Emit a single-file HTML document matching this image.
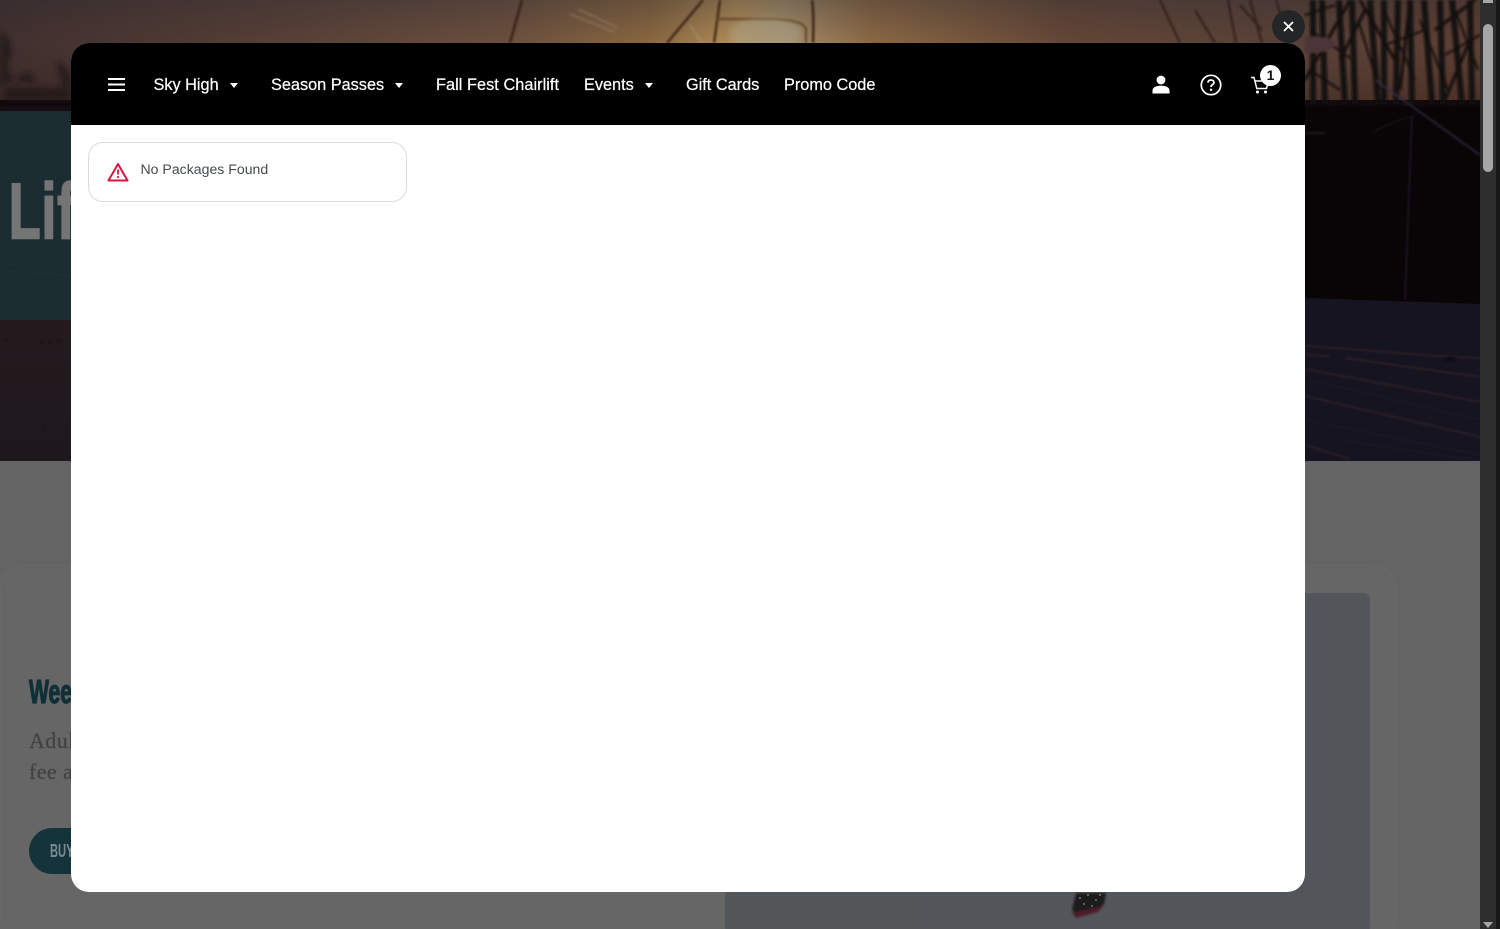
<!DOCTYPE html>
<html lang="en">
<head>
<meta charset="utf-8">
<title>No Packages Found</title>
<style>
html,body{margin:0;padding:0;width:1500px;height:929px;overflow:hidden;background:#646464;font-family:"Liberation Sans",Arial,sans-serif}
.abs{position:absolute}
#bg{position:absolute;left:0;top:0}
.h1{position:absolute;left:9px;top:168px;font:bold 78px/86px "Liberation Sans",sans-serif;color:#757575;-webkit-text-stroke:2.5px #757575;transform-origin:0 0;transform:scaleX(.66);letter-spacing:2px}
.h2{position:absolute;left:29px;top:671px;font:bold 33px/42px "Liberation Sans",sans-serif;color:#112f37;-webkit-text-stroke:1.2px #112f37;transform-origin:0 0;transform:scaleX(.64)}
.p{position:absolute;left:29px;font:22px/31px "Liberation Serif",serif;color:#434343;letter-spacing:.4px;-webkit-text-stroke:.3px #434343}
.btn{position:absolute;left:29px;top:828px;width:120px;height:46px;border-radius:23px;background:#15333a}
.btxt{position:absolute;left:50px;top:840px;font:bold 18px/22px "Liberation Sans",sans-serif;color:#7a8c90;transform-origin:0 0;transform:scaleX(.62)}
#modal{position:absolute;left:71px;top:43px;width:1234px;height:849px;background:#fff;border-radius:18px;overflow:hidden}
#nav{position:absolute;left:0;top:0;width:1234px;height:82px;background:#000}
.n{position:absolute;top:32px;color:#fff;font-size:16.3px;line-height:20px;white-space:nowrap;-webkit-text-stroke:.2px #fff}
.car{position:absolute;top:40px;width:0;height:0;border-left:4.5px solid transparent;border-right:4.5px solid transparent;border-top:5px solid #fff}
#alert{position:absolute;left:17px;top:99px;width:317px;height:58px;border:1px solid #dcdcdc;border-radius:15px;background:#fff}
#alert span{position:absolute;left:51.5px;top:17px;font-size:14.1px;line-height:18px;color:#454a50;white-space:nowrap}
#close{position:absolute;left:1272px;top:10px;width:33px;height:33px;border-radius:50%;background:#232526}
#sb{position:absolute;left:1480px;top:0;width:20px;height:929px;background:#2e2e2e}
#sb i{position:absolute;left:16px;top:0;width:4px;height:929px;background:#171717}
#sb b{position:absolute;left:3px;top:24px;width:10px;height:148px;border-radius:5px;background:#a6a6a6}
#badge{position:absolute;left:1189px;top:22px;width:21px;height:21px;border-radius:50%;background:#fff;color:#111;font:bold 14px/21px "Liberation Sans",sans-serif;text-align:center}
</style>
</head>
<body>
<svg id="bg" width="1500" height="929" viewBox="0 0 1500 929" xmlns="http://www.w3.org/2000/svg">
<defs>
<linearGradient id="sky" x1="0" x2="1" y1="0" y2="0">
<stop offset="0" stop-color="#40302f"/><stop offset=".2" stop-color="#5a4238"/><stop offset=".34" stop-color="#6e5240"/><stop offset=".44" stop-color="#8f6c42"/><stop offset=".5" stop-color="#bd985e"/><stop offset=".53" stop-color="#ad9670"/><stop offset=".59" stop-color="#8f6c46"/><stop offset=".72" stop-color="#664838"/><stop offset=".86" stop-color="#5a4338"/><stop offset="1" stop-color="#5f3f32"/>
</linearGradient>
<linearGradient id="skyV" x1="0" x2="0" y1="0" y2="1">
<stop offset="0" stop-color="#2c2a30" stop-opacity=".4"/><stop offset=".45" stop-color="#3b2a28" stop-opacity=".05"/><stop offset="1" stop-color="#2a1510" stop-opacity=".35"/>
</linearGradient>
<linearGradient id="img" x1="0" x2="1" y1="0" y2="0"><stop offset="0" stop-color="#54575a"/><stop offset="1" stop-color="#52565b"/></linearGradient>
<filter id="b1" x="-5%" y="-5%" width="110%" height="110%"><feGaussianBlur stdDeviation="1.1"/></filter>
<filter id="b2" x="-20%" y="-20%" width="140%" height="140%"><feGaussianBlur stdDeviation="3"/></filter>
<linearGradient id="bandL" x1="0" x2="0" y1="0" y2="1"><stop offset="0" stop-color="#241a1e"/><stop offset="1" stop-color="#1e181c"/></linearGradient>
<clipPath id="hero"><rect x="0" y="0" width="1480" height="461"/></clipPath>
</defs>
<rect x="0" y="0" width="1480" height="929" fill="#646464"/>
<rect x="0" y="0" width="1480" height="461" fill="#090507"/>
<rect x="0" y="0" width="1480" height="101" fill="url(#sky)"/>
<rect x="0" y="0" width="1480" height="101" fill="url(#skyV)"/>
<rect x="0" y="100" width="1480" height="6" fill="#120a0c"/>
<path d="M1305 298L1480 304V461H1305Z" fill="#161420"/>
<rect x="0" y="106" width="71" height="5" fill="#150d10"/>
<rect x="0" y="111" width="71" height="209" fill="#1b2d31"/>
<rect x="0" y="320" width="71" height="141" fill="url(#bandL)"/>
<g clip-path="url(#hero)">
<g filter="url(#b2)" fill="#1c1415" opacity=".75"><path d="M0 32l8 6 4 14-6 16 8 12-14 6zM14 80l14-8 10 12zM56 60l10 8 6 14-8 8zM4 88H71V100H4z"/></g>
<g filter="url(#b1)">
<g stroke="#120a0b" fill="none">
<path d="M1313 0V104M1322 0L1325 104M1339 0L1345 104M1352 0L1355 104M1370 0L1378 104M1384 0L1384 104M1398 0L1396 104M1410 0L1412 104M1424 0L1432 104M1440 0L1443 104M1452 0L1462 104M1470 0L1472 104" stroke-width="6" opacity=".9"/>
<path d="M1305 80L1350 0M1340 60L1365 10M1360 0L1395 60M1410 0L1400 90M1435 30L1475 0M1445 100L1470 40" stroke-width="3"/>
<path d="M1310 30L1350 58M1358 20L1380 90M1384 10L1415 80M1420 20L1448 90M1455 10L1478 70M1305 15L1335 5M1385 45L1425 30M1445 55L1480 35M1310 70L1340 90" stroke-width="2"/>
<path d="M1276 0L1290 43M1250 0L1262 43M1228 0L1236 43M1160 0L1180 43M1195 10L1215 43M1240 5L1262 30" stroke-width="2" opacity=".55"/>
</g>
<path d="M1305 37C1320 36 1340 38 1334 46 1330 53 1310 54 1305 52Z" fill="#4b3438"/>
<path d="M1375 80L1480 155" stroke="#2d2b3d" stroke-width="1.6"/>
<path d="M1372 133C1390 122 1405 118 1418 115" stroke="#17161a" stroke-width="1.4" fill="none"/>
<path d="M1305 133H1325" stroke="#262628" stroke-width="1.4"/>
<path d="M1412 115L1405 300" stroke="#121014" stroke-width="3"/>
<g stroke="#33232b" fill="none" stroke-width="1.6">
<path d="M1305 346C1360 349 1430 357 1480 358M1305 354L1330 357M1345 358L1480 377M1305 369L1480 402M1305 396L1480 437M1305 445L1350 459"/>
</g>
<g stroke="#1f1b2a" fill="none" stroke-width="1.2"><path d="M1305 420L1480 455M1310 380L1480 420M1340 440L1480 461"/></g>
<ellipse cx="1450" cy="359" rx="8" ry="2.5" fill="#0f0e17"/>
<path d="M0 272C25 270 50 274 71 276" stroke="#1f3539" stroke-width="1" fill="none"/>
<g fill="#151015"><circle cx="6" cy="340" r="1"/><circle cx="42" cy="343" r="1"/><circle cx="50" cy="343" r="1"/><circle cx="59" cy="341" r="1.3"/><circle cx="45" cy="429" r="1"/></g>
<path d="M510 43L522 0M667 43L703 0M714 43L720 0" stroke="#2a150c" stroke-width="1.8" fill="none"/>
<path d="M716 19H770Q806 20 806 30V43" stroke="#5a3a1c" stroke-width="1.8" fill="none"/>
<path d="M812 0Q814 10 813 43" stroke="#2a170d" stroke-width="2" fill="none"/>
<path d="M690 25L702 43" stroke="#a8a89a" stroke-width="1.5" opacity=".5"/>
<path d="M570 14L615 32M578 9L618 28" stroke="#9d8a70" stroke-width="1.8" opacity=".45"/>
</g>
<ellipse cx="765" cy="34" rx="36" ry="16" fill="#a8a088" opacity=".5" filter="url(#b2)"/>
</g>
<rect x="0.5" y="565.5" width="1395" height="380" rx="22" fill="#666" stroke="#696969"/>
<rect x="725" y="593" width="645" height="340" rx="6" fill="url(#img)"/>
<g filter="url(#b1)" transform="translate(0 1)">
<path d="M1076 892H1106L1104 903 1097 909 1076 913 1072 909 1074 900Z" fill="#1b1b1c"/>
<path d="M1072 912L1103 905 1098 911 1076 917Z" fill="#4d1f2a"/>
</g>
<g fill="#8d9190"><circle cx="1080" cy="898" r=".9"/><circle cx="1088" cy="895" r=".9"/><circle cx="1096" cy="900" r=".9"/><circle cx="1084" cy="904" r=".9"/><circle cx="1092" cy="906" r=".9"/><circle cx="1100" cy="895" r=".9"/></g>
</svg>

<div class="h1">Lif</div>
<div class="h2">Wee</div>
<div class="p" style="top:725px">Adul</div>
<div class="p" style="top:756px">fee a</div>
<div class="btn"></div>
<div class="btxt">BUY</div>

<div id="modal">
  <div id="nav">
    <svg class="abs" style="left:36px;top:34px" width="19" height="15" viewBox="0 0 19 15"><path d="M1 2H18M1 7.5H18M1 13H18" stroke="#fff" stroke-width="2"/></svg>
    <span class="n" style="left:82.5px">Sky High</span><i class="car" style="left:158.5px"></i>
    <span class="n" style="left:200px">Season Passes</span><i class="car" style="left:324px"></i>
    <span class="n" style="left:365px;letter-spacing:.05px">Fall Fest Chairlift</span>
    <span class="n" style="left:513px">Events</span><i class="car" style="left:574px"></i>
    <span class="n" style="left:615px">Gift Cards</span>
    <span class="n" style="left:713px">Promo Code</span>

    <svg class="abs" style="left:1080px;top:32px" width="20" height="20" viewBox="0 0 20 20"><circle cx="10" cy="5" r="4.4" fill="#fff"/><path d="M1.5 18.5V15.5C1.5 12.3 5 10.6 10 10.6S18.5 12.3 18.5 15.5V18.5Z" fill="#fff"/></svg>
    <svg class="abs" style="left:1128.5px;top:31px" width="22" height="22" viewBox="0 0 22 22"><circle cx="11" cy="11" r="9.7" fill="none" stroke="#fff" stroke-width="1.7"/><path d="M8 8.6C8 6.8 9.4 6 11 6S14 7 14 8.5C14 10.6 11 10.6 11 13" fill="none" stroke="#fff" stroke-width="1.8"/><circle cx="11" cy="15.8" r="1.2" fill="#fff"/></svg>
    <svg class="abs" style="left:1179px;top:33px" width="20" height="19" viewBox="0 0 20 19"><path d="M1 1.5H4L6.8 12.5H16.5L18.5 5H5" fill="none" stroke="#fff" stroke-width="1.5"/><circle cx="7.5" cy="16" r="1.5" fill="#fff"/><circle cx="15.5" cy="16" r="1.5" fill="#fff"/></svg>
    <div id="badge">1</div>
  </div>
  <div id="alert">
    <svg class="abs" style="left:18px;top:18.5px" width="22" height="20" viewBox="0 0 22 20"><path d="M11 2L20.5 18.5H1.5Z" fill="none" stroke="#d5173f" stroke-width="2" stroke-linejoin="round"/><path d="M11 7.5V12.5" stroke="#d5173f" stroke-width="1.8"/><circle cx="11" cy="15" r="1.1" fill="#d5173f"/></svg>
    <span>No Packages Found</span>
  </div>
</div>

<div id="close"><svg class="abs" style="left:11px;top:11px" width="11" height="11" viewBox="0 0 11 11"><path d="M1 1L10 10M10 1L1 10" stroke="#fff" stroke-width="1.7"/></svg></div>

<div id="sb"><i></i><b></b>
<div class="abs" style="left:3px;top:0;width:10px;height:3px;background:#a6a6a6"></div>
<svg class="abs" style="left:2px;top:921px" width="12" height="8" viewBox="0 0 12 8"><path d="M1 1H11L6 7Z" fill="#a6a6a6"/></svg>
</div>
</body>
</html>
